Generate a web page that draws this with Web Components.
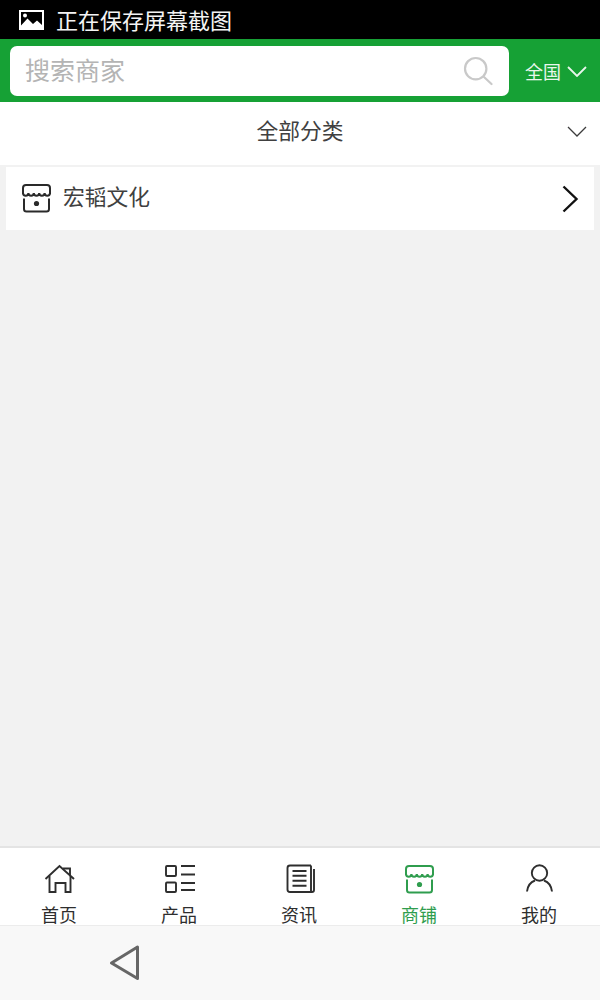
<!DOCTYPE html>
<html lang="zh">
<head>
<meta charset="utf-8">
<title>商铺</title>
<style>
  html, body { margin: 0; padding: 0; background: #f2f2f2; }
  body { font-family: "Noto Sans CJK SC", "Liberation Sans", sans-serif; }
</style>
</head>
<body>
<shop-app>
  <status-bar>正在保存屏幕截图</status-bar>
  <search-header placeholder="搜索商家" region="全国"></search-header>
  <category-bar>全部分类</category-bar>
  <shop-list>
    <shop-row>宏韬文化</shop-row>
  </shop-list>
  <tab-bar>
    <tab-item icon="home">首页</tab-item>
    <tab-item icon="list">产品</tab-item>
    <tab-item icon="news">资讯</tab-item>
    <tab-item icon="store" active>商铺</tab-item>
    <tab-item icon="user">我的</tab-item>
  </tab-bar>
  <nav-bar></nav-bar>
</shop-app>

<script>
const STORE_ICON = `
  <path d="M2 11V5Q2 2 5 2H26Q29 2 29 5V11" />
  <path d="M2 10a2.700 2.700 0 0 0 5.400 0a2.700 2.700 0 0 0 5.400 0a2.700 2.700 0 0 0 5.400 0a2.700 2.700 0 0 0 5.400 0a2.700 2.700 0 0 0 5.400 0" />
  <path d="M3 15.500V26Q3 28.500 5.500 28.500H25.500Q28 28.500 28 26V15.500" />
  <circle cx="15.500" cy="20.500" r="2.600" fill="currentColor" stroke="none" />`;

const ICONS = {
  home: `
    <path d="M1.500 15L15.500 2L30 15" />
    <path d="M5.500 12V28H11.500V19H21.500V28H26.500V12" />
    <path d="M19 4.500H26V11" />`,
  list: `
    <rect x="2" y="2" width="10" height="10" rx="1" />
    <rect x="2" y="18.500" width="10" height="9.500" rx="1" />
    <path d="M17 2H31M17 10.500H31M17 19H31M17 26H31" />`,
  news: `
    <path d="M27 1.500H6Q3.500 1.500 3.500 4V25.500Q3.500 28 6 28H28Q30 28 30 26V5M27 1.500V28" />
    <path d="M8.500 7H22.500M8.500 11.700H22.500M8.500 16.700H22.500M8.500 21.700H22.500" />`,
  store: STORE_ICON,
  user: `
    <circle cx="15.500" cy="9" r="7.700" />
    <path d="M3 27.500Q4 19 11 16.500M28 27.500Q27 19 20 16.500" />`
};

class ShopApp extends HTMLElement {
  connectedCallback() {
    this.attachShadow({ mode: 'open' });
    this.shadowRoot.innerHTML = `
      <style>
        :host {
          display: flex;
          flex-direction: column;
          height: 1000px;
          width: 600px;
          background: #f2f2f2;
          overflow: hidden;
        }
      </style>
      <slot></slot>`;
  }
}

class StatusBar extends HTMLElement {
  connectedCallback() {
    this.attachShadow({ mode: 'open' });
    this.shadowRoot.innerHTML = `
      <style>
        :host {
          display: flex;
          align-items: center;
          gap: 12px;
          height: 39px;
          padding-left: 19px;
          box-sizing: border-box;
          background: #000;
          color: #f4f4f4;
          font-size: 22px;
          flex: none;
        }
        svg { width: 25px; height: 20px; display: block; }
        span { margin-bottom: 2px; }
      </style>
      <svg viewBox="0 0 25 20">
        <path fill="#fff" fill-rule="evenodd" d="M0 0H25V20H0ZM2 2V15.500L8.500 8.500L14 14L18 10.500L23 15V2Z" />
        <circle cx="6" cy="5.500" r="2" fill="#fff" />
      </svg>
      <span><slot></slot></span>`;
  }
}

class SearchHeader extends HTMLElement {
  connectedCallback() {
    this.attachShadow({ mode: 'open' });
    this.shadowRoot.innerHTML = `
      <style>
        :host {
          display: flex;
          align-items: flex-start;
          height: 63px;
          padding: 7px 0 0 10px;
          box-sizing: border-box;
          background: #16a135;
          flex: none;
        }
        .box {
          width: 499px;
          height: 50px;
          border-radius: 7px;
          background: #fff;
          display: flex;
          align-items: center;
          justify-content: space-between;
          padding: 0 16px 0 15px;
          box-sizing: border-box;
          color: #b4b4b4;
          font-size: 25px;
        }
        .box span { margin-bottom: 4px; }
        .box svg { width: 30px; height: 30px; display: block; }
        .region {
          display: flex;
          align-items: center;
          gap: 6px;
          margin: 13px 0 0 16px;
          color: #e9f6ec;
          font-size: 18px;
          line-height: 25px;
        }
        .region svg { width: 20px; height: 11px; display: block; }
      </style>
      <div class="box">
        <span>${this.getAttribute('placeholder')}</span>
        <svg viewBox="0 0 30 30" fill="none" stroke="#c9c9c9">
          <circle cx="12.700" cy="12.700" r="10.700" stroke-width="2.200" />
          <path d="M21 21L28.500 28" stroke-width="2.200" stroke-linecap="round" />
        </svg>
      </div>
      <div class="region">
        <span>${this.getAttribute('region')}</span>
        <svg viewBox="0 0 20 11" fill="none" stroke="#e9f6ec" stroke-width="1.800">
          <path d="M1 1L10 10L19 1" />
        </svg>
      </div>`;
  }
}

class CategoryBar extends HTMLElement {
  connectedCallback() {
    this.attachShadow({ mode: 'open' });
    this.shadowRoot.innerHTML = `
      <style>
        :host {
          display: grid;
          grid-template-columns: 1fr auto 1fr;
          align-items: center;
          height: 63px;
          background: #fff;
          color: #404040;
          font-size: 21.750px;
          flex: none;
          box-sizing: border-box;
          padding: 0 13px 4px 0;
        }
        .t { grid-column: 2; margin: 0 0 4px 13px; }
        svg { justify-self: end; width: 20px; height: 11px; display: block; }
      </style>
      <span class="t"><slot></slot></span>
      <svg viewBox="0 0 20 11" fill="none" stroke="#3c3c3c" stroke-width="1.300">
        <path d="M1 1L10 10L19 1" />
      </svg>`;
  }
}

class ShopList extends HTMLElement {
  connectedCallback() {
    this.attachShadow({ mode: 'open' });
    this.shadowRoot.innerHTML = `
      <style>
        :host {
          display: block;
          flex: 1;
          padding: 2px 6px 0;
        }
      </style>
      <slot></slot>`;
  }
}

class ShopRow extends HTMLElement {
  connectedCallback() {
    this.attachShadow({ mode: 'open' });
    this.shadowRoot.innerHTML = `
      <style>
        :host {
          display: flex;
          align-items: center;
          height: 63px;
          background: #fff;
          color: #404040;
          font-size: 21.750px;
          padding: 0 15px 0 15px;
        }
        .store { width: 31px; height: 31px; display: block; color: #2a2a2a; margin-right: 11px; }
        .t { flex: 1; margin-bottom: 6px; }
        .chev { width: 17px; height: 28px; display: block; }
      </style>
      <svg class="store" viewBox="0 0 31 31" fill="none" stroke="currentColor" stroke-width="2">${STORE_ICON}</svg>
      <span class="t"><slot></slot></span>
      <svg class="chev" viewBox="0 0 17 28" fill="none" stroke="#111" stroke-width="2.400">
        <path d="M1.500 1.500L14.500 14L1.500 26.500" />
      </svg>`;
  }
}

class TabBar extends HTMLElement {
  connectedCallback() {
    this.attachShadow({ mode: 'open' });
    this.shadowRoot.innerHTML = `
      <style>
        :host {
          display: grid;
          grid-template-columns: repeat(5, 1fr);
          height: 77px;
          background: #fff;
          border-top: 2px solid #e4e4e4;
          flex: none;
        }
      </style>
      <slot></slot>`;
  }
}

class TabItem extends HTMLElement {
  connectedCallback() {
    this.attachShadow({ mode: 'open' });
    const active = this.hasAttribute('active');
    const name = this.getAttribute('icon');
    this.shadowRoot.innerHTML = `
      <style>
        :host {
          display: flex;
          flex-direction: column;
          align-items: center;
          padding: 16px 2px 0 0;
          color: ${active ? '#2f9d4e' : '#2e2e2e'};
          font-size: 18px;
        }
        svg { width: 31px; height: 31px; display: block; }
        span { line-height: 20px; margin-top: 9px; }
      </style>
      <svg viewBox="0 0 31 31" fill="none" stroke="currentColor" stroke-width="${active ? 2 : 1.900}">${ICONS[name]}</svg>
      <span><slot></slot></span>`;
  }
}

class NavBar extends HTMLElement {
  connectedCallback() {
    this.attachShadow({ mode: 'open' });
    this.shadowRoot.innerHTML = `
      <style>
        :host {
          display: flex;
          align-items: flex-start;
          height: 75px;
          padding: 19px 0 0 109px;
          box-sizing: border-box;
          background: #f8f8f8;
          border-top: 1px solid #ececec;
          flex: none;
        }
        svg { width: 31px; height: 36px; display: block; }
      </style>
      <svg viewBox="0 0 31 36" fill="none" stroke="#666" stroke-width="3" stroke-linejoin="round">
        <path d="M2.500 18L28.500 2V33.500Z" />
      </svg>`;
  }
}

customElements.define('shop-app', ShopApp);
customElements.define('status-bar', StatusBar);
customElements.define('search-header', SearchHeader);
customElements.define('category-bar', CategoryBar);
customElements.define('shop-list', ShopList);
customElements.define('shop-row', ShopRow);
customElements.define('tab-bar', TabBar);
customElements.define('tab-item', TabItem);
customElements.define('nav-bar', NavBar);
</script>
</body>
</html>
